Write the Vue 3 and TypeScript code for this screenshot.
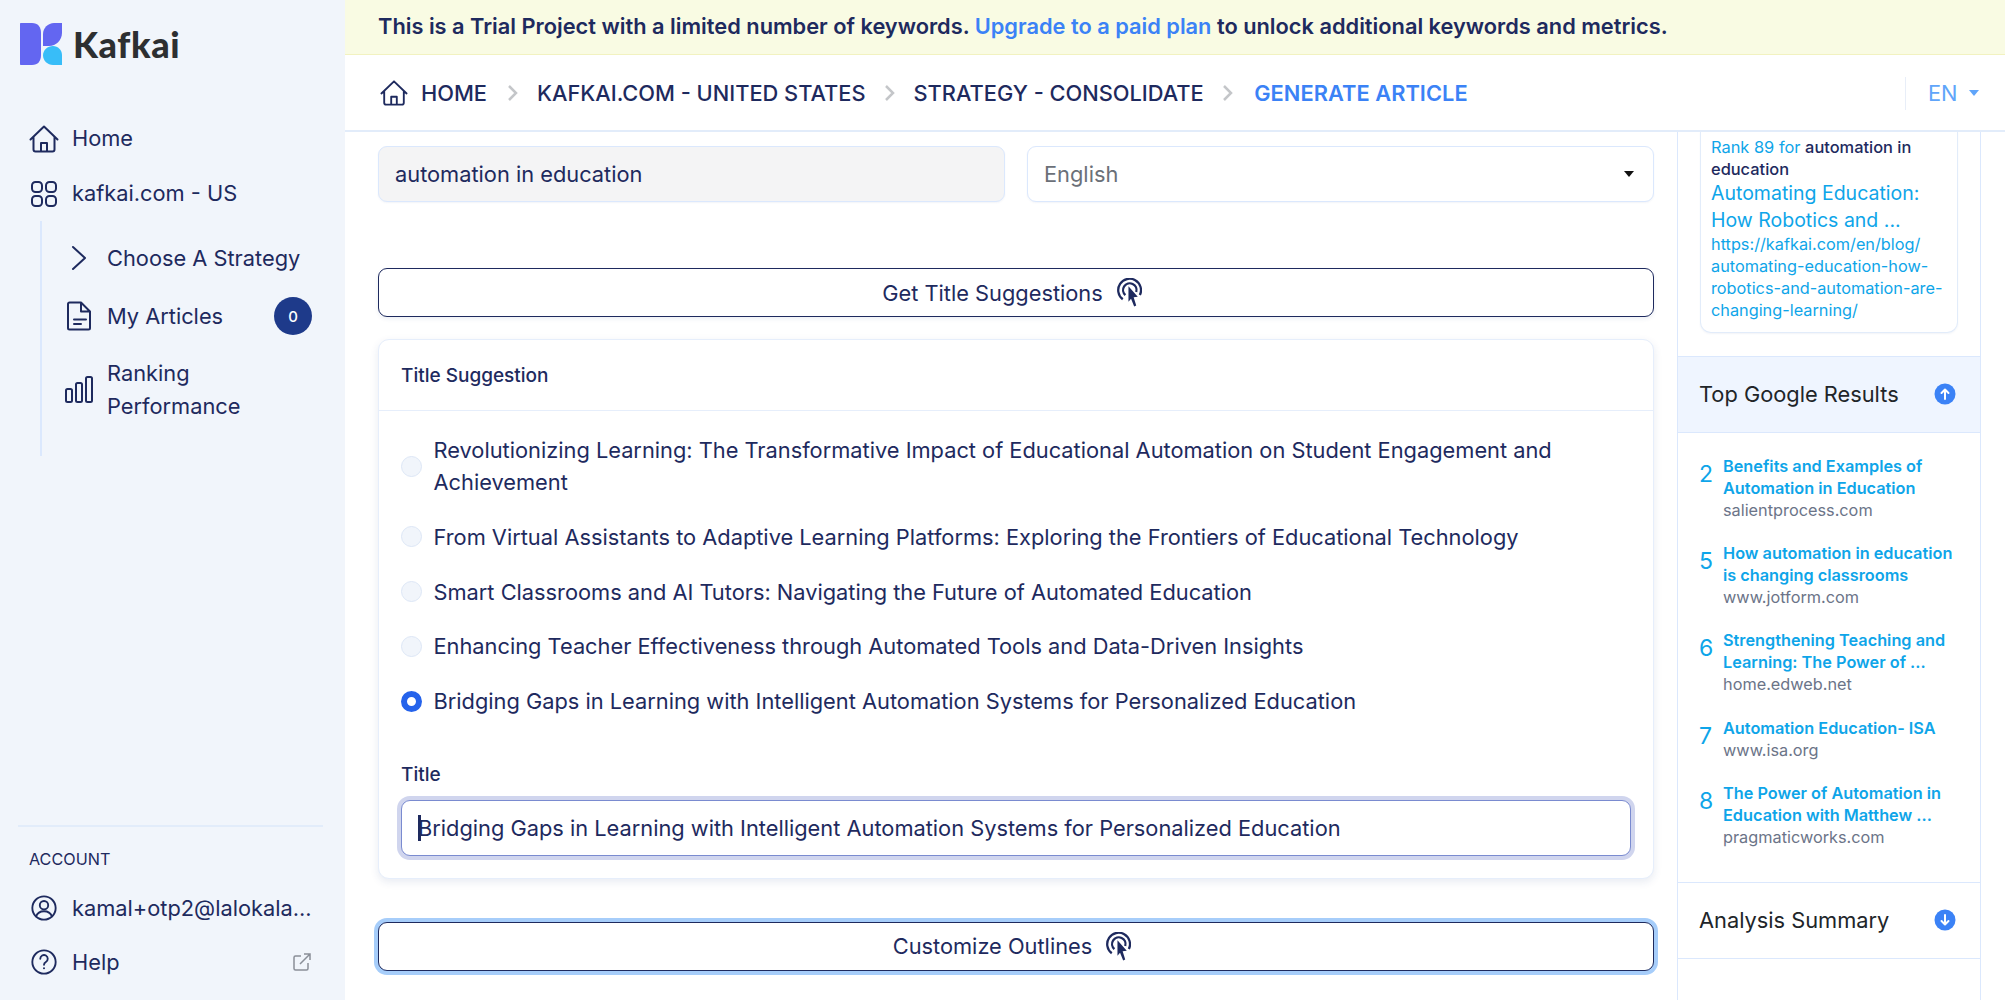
<script setup lang="ts">
interface Result { rank: number; title: string[]; domain: string }
const suggestions: string[] = [
  'Revolutionizing Learning: The Transformative Impact of Educational Automation on Student Engagement and Achievement',
  'From Virtual Assistants to Adaptive Learning Platforms: Exploring the Frontiers of Educational Technology',
  'Smart Classrooms and AI Tutors: Navigating the Future of Automated Education',
  'Enhancing Teacher Effectiveness through Automated Tools and Data-Driven Insights',
  'Bridging Gaps in Learning with Intelligent Automation Systems for Personalized Education',
]
const results: Result[] = [
  { rank: 2, title: ['Benefits and Examples of', 'Automation in Education'], domain: 'salientprocess.com' },
  { rank: 5, title: ['How automation in education', 'is changing classrooms'], domain: 'www.jotform.com' },
  { rank: 6, title: ['Strengthening Teaching and', 'Learning: The Power of ...'], domain: 'home.edweb.net' },
  { rank: 7, title: ['Automation Education- ISA'], domain: 'www.isa.org' },
  { rank: 8, title: ['The Power of Automation in', 'Education with Matthew ...'], domain: 'pragmaticworks.com' },
]
const crumbs: string[] = ['KAFKAI.COM - UNITED STATES', 'STRATEGY - CONSOLIDATE']
</script>

<template>
  <div class="app">
    <aside class="sidebar">
      <div class="brand">
        <svg class="logo" viewBox="0 0 42 42" width="42" height="42">
          <path d="M1 0H12C18 0 21 4 21 10V32C21 38 18 42 12 42H1C.4 42 0 41.600 0 41V1C0 .4 .4 0 1 0Z" fill="#6366f1"/>
          <path d="M23 11C23 5 28 0 34 0H42V10C42 17 36 23 29 23H23Z" fill="#6366f1"/>
          <path d="M33 23C38 23 42 27 42 32V42H33C27.500 42 23 37.500 23 32.500C23 27 27.500 23 33 23Z" fill="#38bdf8"/>
        </svg>
        <span class="brand-name">Kafkai</span>
      </div>
      <nav class="nav">
        <a class="nav-item">
          <svg class="ico" viewBox="0 0 30 28"><path d="M1.500 14.500 15 1.500l13.500 13M4.500 12v12.500a2 2 0 0 0 2 2h17a2 2 0 0 0 2-2V12M12 26.500V18h6v8.500"/></svg>
          <span>Home</span>
        </a>
        <a class="nav-item">
          <svg class="ico" viewBox="0 0 30 28"><rect x="3" y="2" width="10" height="10" rx="3.500"/><rect x="17" y="2" width="10" height="10" rx="3.500"/><rect x="3" y="16" width="10" height="10" rx="3.500"/><rect x="17" y="16" width="10" height="10" rx="3.500"/></svg>
          <span>kafkai.com - US</span>
        </a>
        <div class="subnav">
          <a class="sub-item">
            <svg class="ico sub-ico" viewBox="0 0 30 28"><path d="M9 3l12 11L9 25"/></svg>
            <span>Choose A Strategy</span>
          </a>
          <a class="sub-item">
            <svg class="ico sub-ico" viewBox="0 0 30 30"><path d="M4 3a1.500 1.500 0 0 1 1.500-1.500H17L26 10.500V27a1.500 1.500 0 0 1-1.500 1.500h-19A1.500 1.500 0 0 1 4 27ZM17 1.500V10.500h9M10 18.500h12M10 23h7"/></svg>
            <span class="grow">My Articles</span>
            <span class="badge">0</span>
          </a>
          <a class="sub-item tall">
            <svg class="ico sub-ico" viewBox="0 0 30 30"><rect x="2" y="14" width="6" height="13" rx="1.500"/><rect x="12" y="8" width="6" height="19" rx="1.500"/><rect x="22" y="2" width="6" height="25" rx="1.500"/></svg>
            <span class="wrap">Ranking Performance</span>
          </a>
        </div>
      </nav>
      <div class="account">
        <div class="account-label">ACCOUNT</div>
        <a class="nav-item acct">
          <svg class="ico" viewBox="0 0 30 30"><circle cx="15" cy="15" r="12.500"/><circle cx="15" cy="12" r="4.500"/><path d="M6.500 24c1.500-4 4.500-5.500 8.500-5.500s7 1.500 8.500 5.500"/></svg>
          <span class="ellipsis">kamal+otp2@lalokala...</span>
        </a>
        <a class="nav-item acct">
          <svg class="ico" viewBox="0 0 30 30"><circle cx="15" cy="15" r="12.500"/><path d="M11 11.500a4 4 0 1 1 6 3.500c-1.300.8-2 1.500-2 3"/><circle class="dot" cx="15" cy="21.800" r="1.100"/></svg>
          <span class="grow">Help</span>
          <svg class="ext" viewBox="0 0 18 18"><path d="M8 3H2.500A1.500 1.500 0 0 0 1 4.500v11A1.500 1.500 0 0 0 2.500 17h11a1.500 1.500 0 0 0 1.500-1.500V10M7 11 17 1M11 1h6v6"/></svg>
        </a>
      </div>
    </aside>

    <div class="column">
      <div class="banner">
        This is a Trial Project with a limited number of keywords.
        <a class="banner-link">Upgrade to a paid plan</a>
        to unlock additional keywords and metrics.
      </div>
      <header class="crumbbar">
        <svg class="crumb-home" viewBox="0 0 30 28"><path d="M1.500 14.500 15 1.500l13.500 13M4.500 12v12.500a2 2 0 0 0 2 2h17a2 2 0 0 0 2-2V12M12 26.500V18h6v8.500"/></svg>
        <span class="crumb first">HOME</span>
        <template v-for="c in crumbs" :key="c">
          <svg class="sep" viewBox="0 0 12 18"><path d="M2 2l7 7-7 7"/></svg>
          <span class="crumb">{{ c }}</span>
        </template>
        <svg class="sep" viewBox="0 0 12 18"><path d="M2 2l7 7-7 7"/></svg>
        <span class="crumb active">GENERATE ARTICLE</span>
        <div class="lang"><span>EN</span><i class="lang-caret"></i></div>
      </header>

      <div class="body">
        <main class="main">
          <div class="fields">
            <input class="field readonly" value="automation in education" readonly />
            <div class="field select"><span>English</span><i class="select-caret"></i></div>
          </div>

          <button class="action first-action">
            <span>Get Title Suggestions</span>
            <svg class="tap" viewBox="0 0 24 28"><path d="M5.500 20.500a11 11 0 1 1 16.500-4"/><path d="M8 16.500a6.500 6.500 0 1 1 10.500-3"/><path class="fill" d="M11 8 20 18l-4 .5 2.500 8-2 1-3-7.500L11 23Z"/></svg>
          </button>

          <section class="card">
            <div class="card-head">Title Suggestion</div>
            <div class="card-body">
              <label v-for="(s, i) in suggestions" :key="s" class="radio-row">
                <span class="radio" :class="{ on: i === suggestions.length - 1 }"></span>
                <span>{{ s }}</span>
              </label>
              <div class="title-label">Title</div>
              <div class="title-wrap">
                <input class="title-input" value="Bridging Gaps in Learning with Intelligent Automation Systems for Personalized Education" readonly />
                <i class="text-caret"></i>
              </div>
            </div>
          </section>

          <button class="action focused">
            <span>Customize Outlines</span>
            <svg class="tap" viewBox="0 0 24 28"><path d="M5.500 20.500a11 11 0 1 1 16.500-4"/><path d="M8 16.500a6.500 6.500 0 1 1 10.500-3"/><path class="fill" d="M11 8 20 18l-4 .5 2.500 8-2 1-3-7.500L11 23Z"/></svg>
          </button>
        </main>

        <aside class="panel">
          <div class="rank-wrap">
            <div class="rank-card">
              <div class="rank-line"><span class="sky">Rank 89 for</span> <b>automation in</b><br /><b>education</b></div>
              <div class="rank-title">Automating Education: How Robotics and ...</div>
              <div class="rank-url">https://kafkai.com/en/blog/<br />automating-education-how-<br />robotics-and-automation-are-<br />changing-learning/</div>
            </div>
          </div>
          <div class="panel-head open">
            <span>Top Google Results</span>
            <svg class="toggle" viewBox="0 0 22 22"><circle cx="11" cy="11" r="10.500"/><path d="M11 16V7M7.500 10 11 6.500 14.500 10"/></svg>
          </div>
          <div class="results">
            <div v-for="r in results" :key="r.rank" class="result">
              <span class="result-rank">{{ r.rank }}</span>
              <div>
                <div v-for="t in r.title" :key="t" class="result-title">{{ t }}</div>
                <div class="result-domain">{{ r.domain }}</div>
              </div>
            </div>
          </div>
          <div class="panel-head">
            <span>Analysis Summary</span>
            <svg class="toggle" viewBox="0 0 22 22"><circle cx="11" cy="11" r="10.500"/><path d="M11 6v9M7.500 12 11 15.500 14.500 12"/></svg>
          </div>
        </aside>
      </div>
    </div>
  </div>
</template>

<style>
html, body { margin: 0; overflow: hidden; background: #fff; }
</style>

<style scoped>
.app {
  display: flex;
  width: 2005px;
  height: 1000px;
  overflow: hidden;
  font-family: Inter, "Liberation Sans", sans-serif;
  color: #1e2a5e;
  background: #fff;
}
.sidebar {
  width: 345px;
  flex: none;
  background: #f1f5fb;
  display: flex;
  flex-direction: column;
  box-sizing: border-box;
  padding: 23px 0 0;
}
.brand { display: flex; align-items: center; gap: 11px; padding-left: 20px; height: 42px; }
.logo { flex: none; }
.brand-name { font-family: Lato, "Open Sans", sans-serif; font-weight: 900; font-size: 36px; color: #2d2f31; letter-spacing: .6px; }
.nav { margin-top: 46px; padding-left: 29px; padding-right: 33px; flex: 1; }
.nav-item, .sub-item { display: flex; align-items: center; font-size: 21.800px; gap: 13px; line-height: 33px; }
.nav-item { height: 55px; }
.ico {
  width: 30px; height: 28px; flex: none;
  fill: none; stroke: #1e2a5e; stroke-width: 2; stroke-linecap: round; stroke-linejoin: round;
}
.dot { fill: #1e2a5e; stroke: none; }
.subnav {
  margin-left: 11px;
  border-left: 2px solid #dbe8fd;
  padding-left: 22px;
  height: 235px;
  box-sizing: border-box;
  padding-top: 8px;
}
.sub-item { height: 58px; gap: 13px; }
.sub-item.tall { height: 66px; margin-top: 12px; }
.sub-ico { width: 30px; height: 30px; }
.grow { flex: 1; }
.wrap { width: 170px; }
.badge {
  width: 38px; height: 38px; border-radius: 50%; flex: none;
  background: #1e3a8a; color: #fff; font-size: 15px; font-weight: 500;
  display: flex; align-items: center; justify-content: center;
}
.account { margin: 0 22px 11px 18px; border-top: 2px solid #e2ecfa; padding-top: 20px; }
.account-label { font-size: 16.200px; padding-left: 11px; line-height: 24px; margin-bottom: 10px; }
.acct { padding-left: 11px; height: 54px; gap: 13px; }
.ellipsis { white-space: nowrap; }
.ext { width: 18px; height: 18px; fill: none; stroke: #8a8f98; stroke-width: 1.500; margin-right: 12px; }

.column { flex: 1; min-width: 0; display: flex; flex-direction: column; }
.banner {
  height: 55px; flex: none; box-sizing: border-box;
  background: #f9fbe3; border-bottom: 1px solid #f2f2c0;
  padding-left: 33px;
  font-size: 21.800px; font-weight: 600; line-height: 53px; white-space: nowrap;
}
.banner-link { color: #3b82f6; }
.crumbbar {
  height: 77px; flex: none; box-sizing: border-box;
  border-bottom: 2px solid #e2ecfa;
  display: flex; align-items: center;
  padding: 1px 23px 0 35px;
}
.crumb-home { width: 28px; height: 28px; fill: none; stroke: #1e2a5e; stroke-width: 2; stroke-linecap: round; stroke-linejoin: round; }
.crumb { font-size: 21.800px; font-weight: 500; white-space: nowrap; }
.crumb.first { margin-left: 13px; margin-right: 2px; }
.crumb.active { color: #3b82f6; font-weight: 600; margin-left: 2.500px; letter-spacing: .06px; }
.sep { width: 12px; height: 18px; margin: 0 18px; fill: none; stroke: #c4c6c9; stroke-width: 2.500; }
.lang {
  margin-left: auto; height: 33px; width: 77px; box-sizing: border-box;
  border-left: 1px solid #e8eef8; padding-left: 22px;
  display: flex; align-items: center; gap: 11px;
  color: #60a5fa; font-size: 21.800px;
}
.lang-caret { width: 0; height: 0; border: 5.500px solid transparent; border-top: 6px solid #60a5fa; border-bottom: 0; }

.body { flex: 1; display: flex; overflow: hidden; min-height: 0; }
.main { width: 1276px; margin-left: 33px; padding-top: 14px; flex: none; }
.fields { display: grid; grid-template-columns: 627px 627px; gap: 22px; }
.field {
  box-sizing: border-box; height: 56px;
  border: 1px solid #dbe8fd; border-radius: 9px;
  padding: 0 16px; font: 400 21.800px Inter, sans-serif;
  box-shadow: 0 1px 2px rgba(30, 60, 130, .06);
  outline: none;
}
.readonly { background: #f4f4f5; color: #1e2a5e; width: 100%; }
.select { display: flex; align-items: center; justify-content: space-between; color: #6b7078; background: #fff; }
.select-caret { width: 0; height: 0; border: 5px solid transparent; border-top: 6px solid #111; border-bottom: 0; margin-right: 3px; }
.action {
  display: flex; align-items: center; justify-content: center; gap: 14px;
  width: 100%; height: 49px; box-sizing: border-box;
  padding: 0 8px 0 0;
  background: #fff; color: #1e2a5e;
  border: 1.500px solid #1e2a5e; border-radius: 9px;
  font: 400 21.800px Inter, sans-serif;
  box-shadow: 0 2px 4px rgba(30, 60, 130, .08);
}
.first-action { margin-top: 66px; }
.focused { margin-top: 43px; box-shadow: 0 0 0 4px #a6cdfa; }
.tap { width: 25px; height: 29px; fill: none; stroke: #1e2a5e; stroke-width: 2.200; }
.tap .fill { fill: #1e2a5e; stroke: none; }
.card {
  margin-top: 22px;
  border: 1px solid #e6eefb; border-radius: 11px;
  box-shadow: 0 3px 8px rgba(30, 60, 130, .10);
  background: #fff;
}
.card-head {
  height: 71px; box-sizing: border-box; padding-left: 22px;
  border-bottom: 1px solid #e6eefb;
  display: flex; align-items: center;
  font-size: 19px; font-weight: 500;
}
.card-body { padding: 23px 22px 22px; }
.radio-row { display: flex; align-items: center; gap: 11.500px; font-size: 21.800px; line-height: 32px; margin-bottom: 22.800px; }
.radio {
  width: 21px; height: 21px; border-radius: 50%; flex: none; box-sizing: border-box;
  background: #f1f5fb; border: 1px solid #dde7f6;
}
.radio.on { background: #fff; border: 6px solid #2563eb; }
.title-label { font-size: 19px; font-weight: 500; line-height: 24px; margin-top: 45.500px; margin-bottom: 13px; }
.title-wrap { position: relative; }
.title-input {
  display: block; width: 100%; height: 56px; box-sizing: border-box;
  border: 1.500px solid #7a8bd0; border-radius: 9px;
  box-shadow: 0 0 0 4px #d0d5ee;
  padding: 0 16px; font: 400 21.800px Inter, sans-serif; color: #1e2a5e; outline: none; background: #fff;
}
.text-caret { position: absolute; left: 17px; top: 15px; width: 2.500px; height: 26px; background: #1e2a5e; }

.panel {
  width: 304px; margin-left: 23px; flex: none; box-sizing: border-box;
  border-left: 1px solid #dbe8fd; border-right: 1px solid #dbe8fd;
}
.rank-wrap { padding: 0 22px 23px; }
.rank-card {
  border: 1px solid #e2ecfa; border-top: 0; border-radius: 0 0 11px 11px;
  padding: 4px 10px 11px; font-size: 16.400px; line-height: 22px;
  box-shadow: 0 1px 2px rgba(30, 60, 130, .06);
}
.rank-line b { font-weight: 500; }
.sky { color: #0ea5e9; }
.rank-title { color: #0ea5e9; font-size: 19.500px; line-height: 27px; font-weight: 400; margin-bottom: -1px; }
.rank-url { color: #0ea5e9; font-size: 16.300px; line-height: 22px; white-space: nowrap; }
.panel-head {
  height: 77px; box-sizing: border-box; padding: 0 24px 0 21px;
  border-top: 1px solid #dbe8fd; border-bottom: 1px solid #dbe8fd;
  display: flex; align-items: center; justify-content: space-between;
  font-size: 21.800px; color: #212529;
}
.panel-head.open { background: #eff5ff; padding-bottom: 1px; }
.toggle { width: 22px; height: 22px; }
.toggle circle { fill: #3b82f6; }
.toggle path { fill: none; stroke: #fff; stroke-width: 2; stroke-linecap: round; stroke-linejoin: round; }
.results { padding: 22px 0 34px 21px; }
.result { display: flex; gap: 12px; margin-bottom: 21.200px; }
.result:last-child { margin-bottom: 0; }
.result-rank { color: #0ea5e9; font-size: 23px; line-height: 38px; width: 12px; }
.result-title { color: #0ea5e9; font-size: 16.300px; font-weight: 600; line-height: 22px; white-space: nowrap; }
.result-domain { color: #6b7488; font-size: 16.300px; line-height: 22px; }
</style>
